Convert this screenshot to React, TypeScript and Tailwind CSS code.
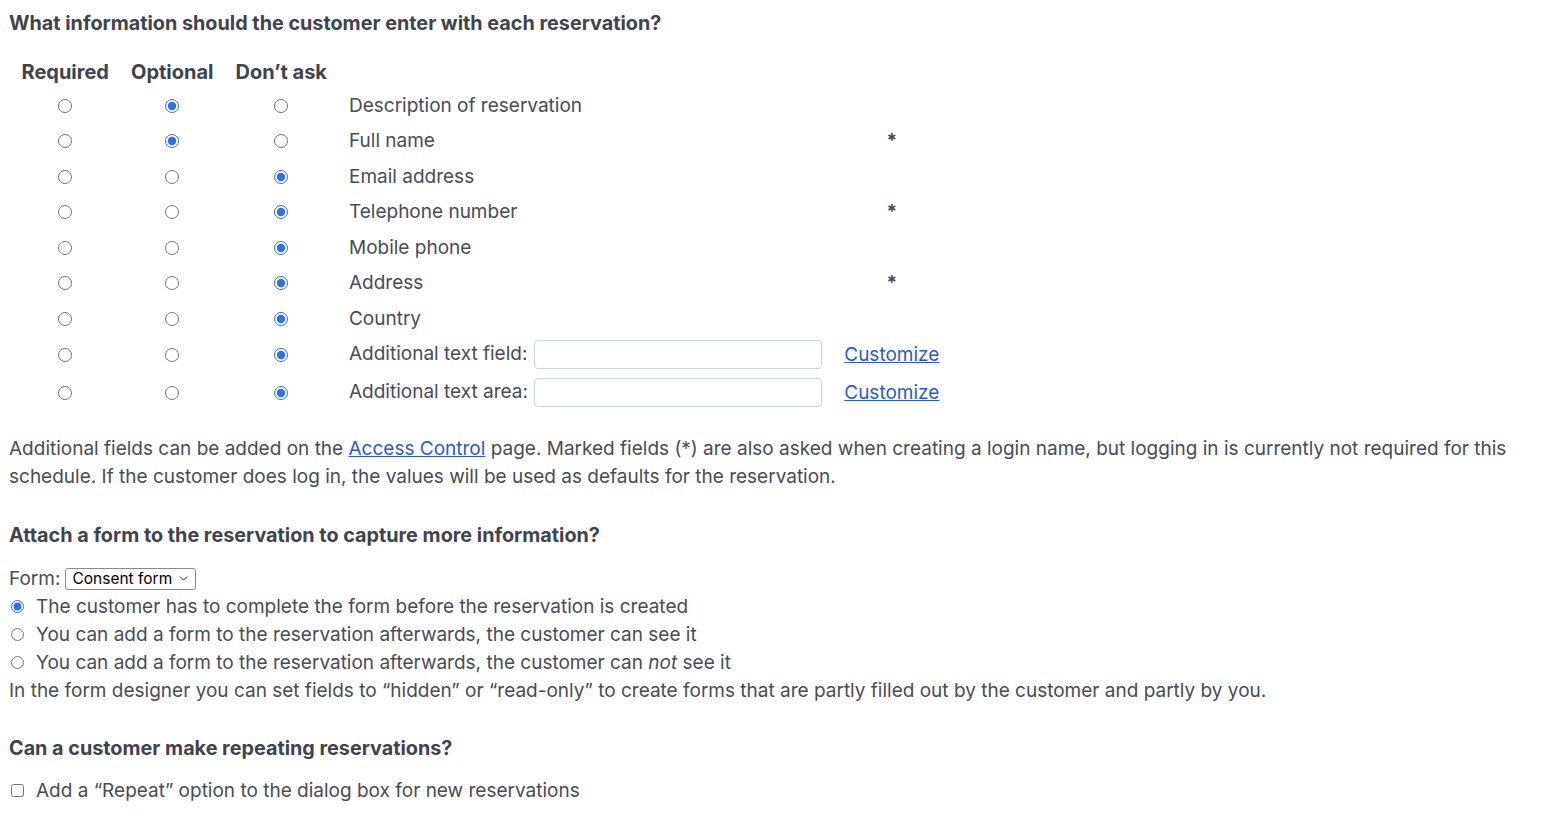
import { ChevronDown } from 'lucide-react'

// Which fields the customer fills in, and their current choice
const fields = [
  { label: 'Description of reservation', choice: 'optional', marked: false },
  { label: 'Full name', choice: 'optional', marked: true },
  { label: 'Email address', choice: 'none', marked: false },
  { label: 'Telephone number', choice: 'none', marked: true },
  { label: 'Mobile phone', choice: 'none', marked: false },
  { label: 'Address', choice: 'none', marked: true },
  { label: 'Country', choice: 'none', marked: false },
]

const extraFields = [
  { label: 'Additional text field:' },
  { label: 'Additional text area:' },
]

function Radio({ checked, name }: { checked: boolean; name: string }) {
  return (
    <input
      type="radio"
      name={name}
      defaultChecked={checked}
      className="m-0 h-[14px] w-[14px] align-middle accent-[#2f6fe8]"
    />
  )
}

function ChoiceCells({ choice, name }: { choice: string; name: string }) {
  return (
    <>
      <td className="px-[11px] text-center"><Radio name={name} checked={choice === 'required'} /></td>
      <td className="px-[11px] text-center"><Radio name={name} checked={choice === 'optional'} /></td>
      <td className="px-[11px] text-center"><Radio name={name} checked={choice === 'none'} /></td>
    </>
  )
}

export default function App() {
  return (
    <div className="min-h-screen bg-white px-[9px] pt-[9px] text-[19px] leading-[28px] text-[#484c57]" style={{ fontFamily: 'Inter, "Noto Sans", sans-serif' }}>
      <h3 className="text-[19.8px] font-bold text-[#3f434d]">What information should the customer enter with each reservation?</h3>

      <table className="mt-[20px] ml-[1.5px]">
        <thead>
          <tr className="h-[30px]">
            <th className="px-[11px] text-center text-[20px] font-bold text-[#3f434d]">Required</th>
            <th className="px-[11px] text-center text-[20px] font-bold text-[#3f434d]">Optional</th>
            <th className="px-[11px] text-center text-[20px] font-bold text-[#3f434d]">Don’t ask</th>
            <th></th>
            <th></th>
          </tr>
        </thead>
        <tbody>
          {fields.map((f, i) => (
            <tr key={f.label} className="h-[35.5px]">
              <ChoiceCells choice={f.choice} name={`field-${i}`} />
              <td className="px-[11px] pt-[2px] text-left">{f.label}</td>
              <td className="px-[11px] text-center align-top pt-[4px] font-bold">{f.marked ? '*' : ''}</td>
            </tr>
          ))}
          {extraFields.map((f, i) => (
            <tr key={f.label} className="h-[38px]">
              <ChoiceCells choice="none" name={`extra-${i}`} />
              <td className="px-[11px] text-left whitespace-nowrap">
                {f.label}{' '}
                <input
                  type="text"
                  className="ml-px h-[29px] w-[288px] rounded-[4px] border border-[#cfd3da] bg-white align-middle outline-none"
                />
              </td>
              <td className="px-[11px]">
                <a href="#" className="text-[#2a5ad6] underline">Customize</a>
              </td>
            </tr>
          ))}
        </tbody>
      </table>

      <p className="mt-[23px]">
        Additional fields can be added on the <a href="#" className="text-[#2a5ad6] underline">Access Control</a> page. Marked fields (*) are also asked when creating a login name, but logging in is currently not required for this schedule. If the customer does log in, the values will be used as defaults for the reservation.
      </p>

      <h3 className="mt-[30px] text-[19.8px] font-bold text-[#3f434d]">Attach a form to the reservation to capture more information?</h3>

      <div className="mt-[16px] flex items-center gap-[5px]">
        <span>Form:</span>
        <div className="inline-flex h-[22px] items-center gap-[5px] rounded-[3px] border border-[#8a8a8a] pl-[6px] pr-[5px] text-[15.5px] leading-none text-black">
          Consent form
          <ChevronDown className="h-[13px] w-[13px]" strokeWidth={1.5} />
        </div>
      </div>
      <div className="flex flex-col">
        <label className="flex items-center gap-[12px]">
          <input type="radio" name="form-mode" defaultChecked className="m-0 ml-[2px] h-[13px] w-[13px] accent-[#2f6fe8]" />
          The customer has to complete the form before the reservation is created
        </label>
        <label className="flex items-center gap-[12px]">
          <input type="radio" name="form-mode" className="m-0 ml-[2px] h-[13px] w-[13px] accent-[#2f6fe8]" />
          You can add a form to the reservation afterwards, the customer can see it
        </label>
        <label className="flex items-center gap-[12px]">
          <input type="radio" name="form-mode" className="m-0 ml-[2px] h-[13px] w-[13px] accent-[#2f6fe8]" />
          <span>You can add a form to the reservation afterwards, the customer can <em>not</em> see it</span>
        </label>
      </div>
      <p>In the form designer you can set fields to “hidden” or “read-only” to create forms that are partly filled out by the customer and partly by you.</p>

      <h3 className="mt-[29px] text-[19.8px] font-bold text-[#3f434d]">Can a customer make repeating reservations?</h3>

      <label className="mt-[15px] flex items-center gap-[12px]">
        <input type="checkbox" className="m-0 ml-[2px] h-[13px] w-[13px] accent-[#2f6fe8]" />
        Add a “Repeat” option to the dialog box for new reservations
      </label>
    </div>
  )
}
